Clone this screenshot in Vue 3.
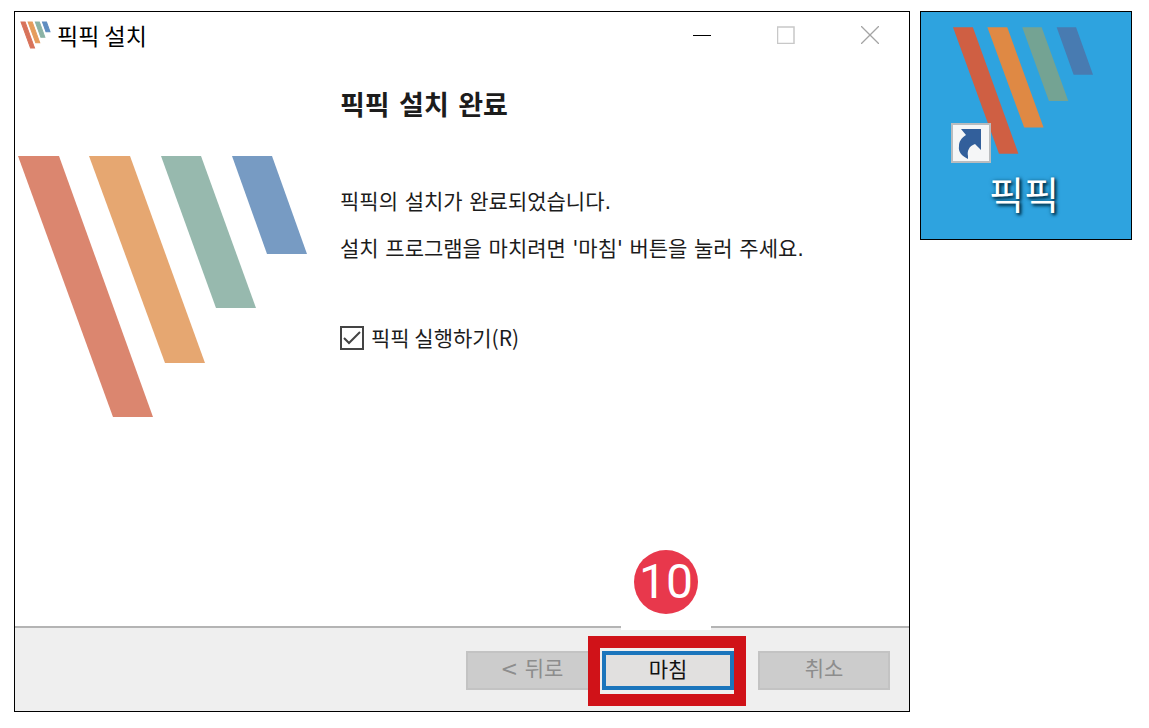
<script setup>
import { ref } from 'vue'

const launch = ref(true)

const bars = [
  { name: 'red', points: '0,0 41,0 135,261 95,261' },
  { name: 'orange', points: '71,0 112,0 187,207 147,207' },
  { name: 'green', points: '143,0 183,0 238,152 198,152' },
  { name: 'blue', points: '214,0 254,0 289,98 249,98' },
]
</script>

<template>
  <main class="page">
    <section class="window" aria-labelledby="window-title">
      <header class="titlebar">
        <svg class="mini-logo" viewBox="0 0 289 261" aria-hidden="true">
          <polygon v-for="bar in bars" :key="bar.name" :class="bar.name" :points="bar.points" />
        </svg>
        <span id="window-title" class="title">픽픽 설치</span>
        <div class="controls">
          <button type="button" aria-label="최소화">
            <svg viewBox="0 0 18 18"><path d="M0 9.5H18" stroke="#000" /></svg>
          </button>
          <button type="button" aria-label="최대화">
            <svg viewBox="0 0 18 18"><path d="M.5 1H17V17.5H.5Z" stroke="#c8c8c8" stroke-width="1.5" /></svg>
          </button>
          <button type="button" aria-label="닫기">
            <svg viewBox="0 0 18 18"><path d="M0 0L18 18M18 0L0 18" stroke="#a4a4a4" stroke-width="1.3" /></svg>
          </button>
        </div>
      </header>

      <div class="body">
        <svg class="logo" viewBox="0 0 289 261" aria-hidden="true">
          <polygon v-for="bar in bars" :key="bar.name" :class="bar.name" :points="bar.points" />
        </svg>
        <div class="content">
          <h1>픽픽 설치 완료</h1>
          <p>픽픽의 설치가 완료되었습니다.</p>
          <p>설치 프로그램을 마치려면 '마침' 버튼을 눌러 주세요.</p>
          <div class="option">
            <input id="launch" v-model="launch" type="checkbox" />
            <label for="launch">픽픽 실행하기(R)</label>
          </div>
        </div>
      </div>

      <footer class="footer">
        <button type="button" class="btn" disabled>&lt; 뒤로</button>
        <div class="finish">
          <button type="button" class="btn primary">마침</button>
          <span class="frame"></span>
          <div class="callout"><span class="step">10</span></div>
        </div>
        <button type="button" class="btn" disabled>취소</button>
      </footer>
    </section>

    <a class="desktop" href="#">
      <span class="shortcut">
        <svg class="app-icon" viewBox="0 0 289 261" aria-hidden="true">
          <polygon v-for="bar in bars" :key="bar.name" :class="bar.name" :points="bar.points" />
        </svg>
        <svg class="arrow" viewBox="0 0 40 40" aria-hidden="true">
          <rect x="1" y="1" width="38" height="38" fill="#f5f6f7" stroke="#b9bcbf" stroke-width="2" />
          <path d="M10 6H30V27L24 21C18 23 16 28 17 33L17 36C11 33 7 29 8 23C8 19 10 15 15 12Z" fill="#325f9b" />
        </svg>
      </span>
      <span class="name">픽픽</span>
    </a>
  </main>
</template>

<style>
body {
  background: #fff;
}
</style>

<style scoped>
.page {
  box-sizing: border-box;
  min-height: 100vh;
  display: flex;
  align-items: stretch;
  gap: 10px;
  padding: 11px 17px 16px 14px;
  font-family: "DejaVu Sans", "Noto Sans CJK KR", sans-serif;
  color: #1c1c1c;
}

.window {
  flex: 1;
  min-width: 0;
  display: flex;
  flex-direction: column;
  box-sizing: border-box;
  border: 1px solid #000;
  background: #fff;
}

.titlebar {
  display: flex;
  align-items: center;
  gap: 7px;
  height: 46px;
  padding: 0 0 2px 6px;
}

.mini-logo {
  width: 29px;
  height: 28px;
  overflow: visible;
}

.title {
  flex: 1;
  font: 400 23px/32px "Noto Sans CJK KR", sans-serif;
  color: #000;
}

.controls {
  display: flex;
  gap: 6px;
}

.controls button {
  width: 78px;
  height: 46px;
  display: flex;
  align-items: center;
  justify-content: center;
  padding: 0;
  border: 0;
  background: none;
}

.controls svg {
  width: 18px;
  height: 18px;
  fill: none;
}

.red { fill: #db866f; }
.orange { fill: #e6a771; }
.green { fill: #97b9ae; }
.blue { fill: #779bc3; }

.body {
  flex: 1;
  display: flex;
  align-items: flex-start;
  gap: 33px;
  padding-left: 3px;
}

.logo {
  flex: none;
  width: 289px;
  height: 261px;
  margin-top: 96px;
}

.content {
  padding-top: 26px;
}

h1 {
  margin: 0 0 53px;
  font-size: 27px;
  line-height: 40px;
  font-weight: 700;
}

p {
  margin: 0;
  font-size: 21px;
  line-height: 47px;
}

.option {
  display: flex;
  align-items: center;
  gap: 7px;
  height: 24px;
  margin-top: 53px;
}

.option input {
  appearance: none;
  width: 24px;
  height: 24px;
  margin: 0;
  border: 2px solid #444;
  background: #fff;
}

.option input:checked {
  background: url("data:image/svg+xml,%3Csvg xmlns='http://www.w3.org/2000/svg' viewBox='0 0 20 20'%3E%3Cpath d='M2 10L7 15L18 4' fill='none' stroke='%23444' stroke-width='2'/%3E%3C/svg%3E") center / 20px 20px no-repeat;
}

.option label {
  padding-bottom: 2px;
  font: 400 21px/24px "Noto Sans CJK KR", sans-serif;
}

.footer {
  display: flex;
  justify-content: flex-end;
  padding: 23px 19px 21px;
  border-top: 2px solid #b4b4b4;
  background: #efefef;
}

.btn {
  box-sizing: border-box;
  width: 132px;
  height: 39px;
  padding: 0 0 3px;
  border: 2px solid #c3c3c3;
  background: #ccc;
  color: #8d8d8d;
  font-family: inherit;
  font-size: 21px;
  line-height: 30px;
}

.finish {
  position: relative;
  margin: 0 24px 0 4px;
}

.primary {
  display: block;
  border: 4px solid #1b75bc;
  background: #e1e0df;
  color: #111;
}

.frame {
  position: absolute;
  inset: -15px -12px -16px -14px;
  border: 12px solid #d01218;
  pointer-events: none;
}

.callout {
  position: absolute;
  bottom: 60px;
  left: 19px;
  width: 90px;
  height: 80px;
  background: #fff;
}

.step {
  display: block;
  width: 64px;
  height: 64px;
  margin: 0 auto;
  border-radius: 50%;
  background: #e8384c;
  color: #fff;
  text-align: center;
  font: 400 48px/64px Roboto, "Liberation Sans", sans-serif;
}

.desktop {
  box-sizing: border-box;
  align-self: flex-start;
  width: 212px;
  padding: 15px 0 14px;
  border: 1px solid #000;
  background: #2ea3df;
  text-decoration: none;
}

.shortcut {
  position: relative;
  display: block;
  width: 140px;
  margin-left: 32px;
}

.app-icon {
  display: block;
  width: 140px;
  height: 127px;
}

.app-icon .red { fill: #cf5f43; }
.app-icon .orange { fill: #df8944; }
.app-icon .green { fill: #74a393; }
.app-icon .blue { fill: #487bb1; }

.mini-logo polygon { stroke-width: 10px; }
.mini-logo .red { fill: #d8735a; stroke: #d8735a; }
.mini-logo .orange { fill: #e59d5c; stroke: #e59d5c; }
.mini-logo .green { fill: #8bb3a5; stroke: #8bb3a5; }
.mini-logo .blue { fill: #5f8dc0; stroke: #5f8dc0; }

.arrow {
  position: absolute;
  left: -2px;
  bottom: -9px;
  width: 40px;
  height: 40px;
}

.name {
  display: block;
  margin-top: 13px;
  padding-right: 4px;
  text-align: center;
  color: #fff;
  font-size: 38px;
  line-height: 58px;
  text-shadow: 2px 2px 3px #00344f, 1px 1px 4px #06425f;
}
</style>
